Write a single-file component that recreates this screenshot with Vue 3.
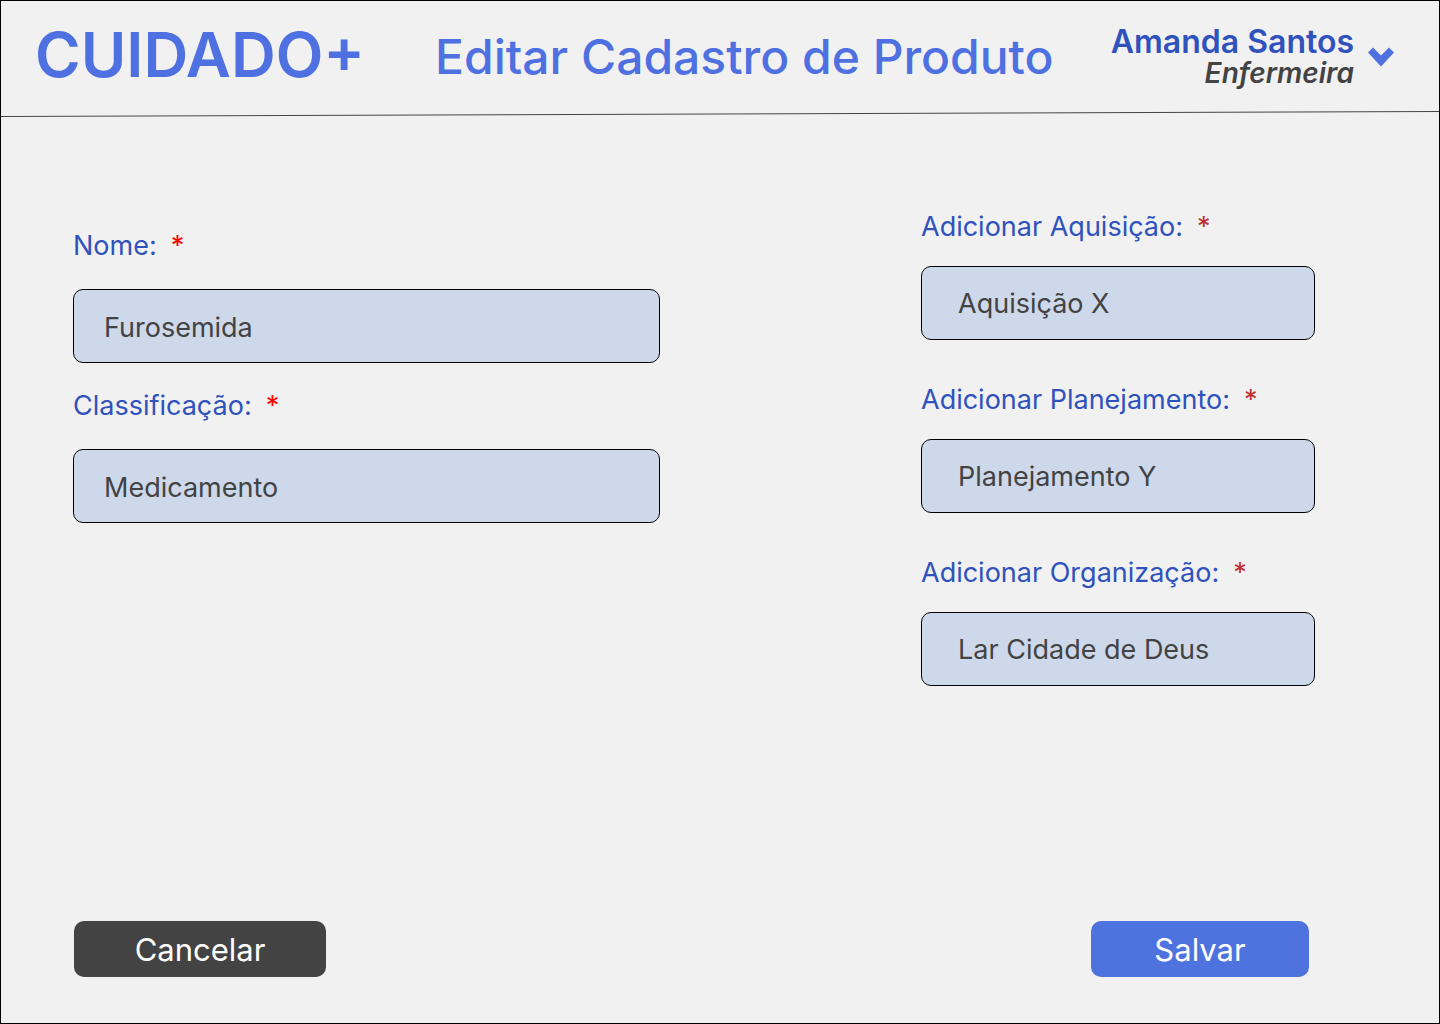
<script setup>
import { reactive } from 'vue'

const mainFields = reactive([
  { id: 'nome', label: 'Nome:', value: 'Furosemida' },
  { id: 'classificacao', label: 'Classificação:', value: 'Medicamento' },
])

const linkedFields = reactive([
  { id: 'aquisicao', label: 'Adicionar Aquisição:', value: 'Aquisição X' },
  { id: 'planejamento', label: 'Adicionar Planejamento:', value: 'Planejamento Y' },
  { id: 'organizacao', label: 'Adicionar Organização:', value: 'Lar Cidade de Deus' },
])
</script>

<template>
  <form class="page" @submit.prevent>
    <header class="header">
      <div class="bar">
        <span class="logo">CUIDADO+</span>
        <h1 class="title">Editar Cadastro de Produto</h1>
        <div class="user">
          <div class="identity">
            <span class="name">Amanda Santos</span>
            <span class="role">Enfermeira</span>
          </div>
          <button class="toggle" type="button" aria-label="Abrir menu do usuário">
            <svg width="26" height="20" viewBox="0 0 26 20" aria-hidden="true">
              <path d="M0 5.500L5 0.500L13 8.500L21 0.500L26 5.500L13 19.500Z" fill="#4e70e0" />
            </svg>
          </button>
        </div>
      </div>
      <svg class="rule" viewBox="0 0 1440 6" preserveAspectRatio="none" aria-hidden="true">
        <line x1="0" y1="5.5" x2="1440" y2="0.5" stroke="#434343" stroke-width="1" />
      </svg>
    </header>

    <main class="content">
      <section class="column column-main">
        <div v-for="field in mainFields" :key="field.id" class="field">
          <label :for="field.id">{{ field.label }}<span class="required">*</span></label>
          <input :id="field.id" v-model="field.value" type="text" />
        </div>
      </section>
      <section class="column column-linked">
        <div v-for="field in linkedFields" :key="field.id" class="field">
          <label :for="field.id">{{ field.label }}<span class="required">*</span></label>
          <input :id="field.id" v-model="field.value" type="text" />
        </div>
      </section>
    </main>

    <footer class="actions">
      <button class="button cancel" type="button">Cancelar</button>
      <button class="button save" type="submit">Salvar</button>
    </footer>
  </form>
</template>

<style>
body {
  margin: 0;
}
</style>

<style scoped>
.page {
  box-sizing: border-box;
  display: flex;
  flex-direction: column;
  min-height: 100vh;
  border: 1px solid #000;
  background: #f1f1f1;
  color: #434343;
  font-family: Inter, "Open Sans", sans-serif;
}

.bar {
  box-sizing: border-box;
  display: flex;
  align-items: center;
  height: 110px;
  padding: 2px 45px 0 34px;
}

.logo {
  margin-bottom: 4px;
  color: #4e70e0;
  font-size: 62px;
  font-weight: 600;
  line-height: 72px;
}

.title {
  margin: 0 0 0 70px;
  color: #4e70e0;
  font-size: 48px;
  font-weight: 500;
  line-height: 60px;
  white-space: nowrap;
}

.user {
  display: flex;
  align-items: center;
  gap: 14px;
  margin-left: auto;
}

.identity {
  display: flex;
  flex-direction: column;
  align-items: flex-end;
  white-space: nowrap;
}

.name {
  color: #2f52bd;
  font-size: 32px;
  font-weight: 600;
  line-height: 32px;
}

.role {
  font-size: 28px;
  font-style: italic;
  font-weight: 600;
  line-height: 30px;
}

.toggle {
  display: flex;
  padding: 0;
  border: 0;
  background: none;
  cursor: pointer;
}

.rule {
  display: block;
  width: 100%;
  height: 6px;
}

.content {
  display: flex;
  flex: 1;
  justify-content: space-between;
  gap: 48px;
  padding: 92px 124px 48px 72px;
}

.column {
  display: flex;
  flex-direction: column;
}

.column-main {
  flex: 0 1 587px;
  gap: 25px;
  padding-top: 19px;
}

.column-linked {
  flex: 0 1 394px;
  gap: 42px;
}

.field {
  display: flex;
  flex-direction: column;
}

.column-main .field {
  gap: 25px;
}

.column-linked .field {
  gap: 21px;
}

label {
  color: #2f52bd;
  font-size: 27px;
  line-height: 36px;
}

.required {
  margin-left: 14px;
  color: #f00;
}

.column-linked .required {
  color: #c03030;
}

input {
  box-sizing: border-box;
  width: 100%;
  height: 74px;
  padding: 2px 30px 0;
  border: 1px solid #000;
  border-radius: 10px;
  background: #cdd8ea;
  color: #434343;
  font: inherit;
  font-size: 27px;
}

.column-linked input {
  padding: 0 36px;
}

.actions {
  display: flex;
  justify-content: space-between;
  padding: 0 130px 46px 73px;
}

.button {
  height: 56px;
  padding: 0;
  border: 0;
  border-radius: 10px;
  color: #fff;
  font: inherit;
  font-size: 31px;
  cursor: pointer;
}

.cancel {
  width: 252px;
  background: #434343;
}

.save {
  width: 218px;
  background: #4e73df;
}
</style>
